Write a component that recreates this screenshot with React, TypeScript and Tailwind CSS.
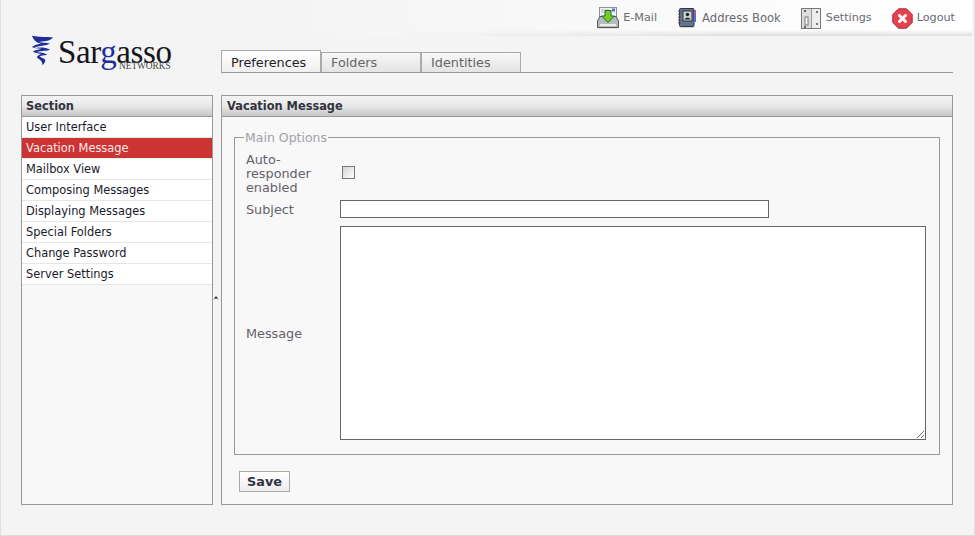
import React from "react";

const font = { fontFamily: '"DejaVu Sans", Verdana, sans-serif' };

function MailIcon() {
  return (
    <svg width="22" height="22" viewBox="0 0 22 22">
      <rect x="2.5" y="0.5" width="17" height="12" fill="#eef1f5" stroke="#8a929a" />
      <rect x="15" y="1.5" width="3" height="3" fill="#3f7fe0" />
      <path d="M4 3 H12 M4 5 H10" stroke="#b8c0c8" />
      <path d="M0.5 14 L3 9.5 H19 L21.5 14 V20.5 H0.5 Z" fill="#b8bcc0" stroke="#55595c" />
      <path d="M3 17 H19 V19 H3 Z" fill="#ececec" />
      <path d="M8 3.5 H14 V9 H17.5 L11 15.5 L4.5 9 H8 Z" fill="#74c832" stroke="#2f6a12" />
      <rect x="1" y="21" width="20" height="1" fill="#dddddd" />
    </svg>
  );
}
function BookIcon() {
  return (
    <svg width="20" height="22" viewBox="0 0 20 22">
      <rect x="2.5" y="1.5" width="14.5" height="18" rx="1" fill="#64748a" stroke="#2e3844" />
      <rect x="17" y="3" width="2" height="4" fill="#c04fa0" />
      <rect x="17" y="7" width="2" height="4" fill="#7a5cc8" />
      <rect x="17" y="11" width="2" height="4" fill="#4a70d8" />
      <rect x="6" y="4" width="9" height="10" fill="#c8d0d8" stroke="#303a44" />
      <circle cx="10.5" cy="7.5" r="1.7" fill="#222" />
      <path d="M7.5 12.5 C8 10 13 10 13.5 12.5 Z" fill="#222" />
      <path d="M1 4 H4 M1 7 H4 M1 10 H4 M1 13 H4 M1 16 H4" stroke="#555" strokeWidth="1" />
      <rect x="3" y="20" width="14" height="1" fill="#d8d8d8" />
    </svg>
  );
}
function SettingsIcon() {
  return (
    <svg width="20" height="21" viewBox="0 0 20 21">
      <rect x="0.5" y="0.5" width="19" height="20" fill="#eceeee" stroke="#777" />
      <rect x="1" y="1" width="9" height="19" fill="#dcdede" />
      <path d="M10.5 1 V20" stroke="#999" />
      <rect x="4" y="9" width="3" height="8" fill="#fff" stroke="#777" />
      <rect x="3" y="2" width="2" height="2" fill="#666" />
      <rect x="3" y="18" width="2" height="2" fill="#666" />
      <rect x="15" y="3" width="2" height="2" fill="#777" />
      <rect x="15" y="15" width="2" height="2" fill="#777" />
    </svg>
  );
}
function LogoutIcon() {
  return (
    <svg width="21" height="21" viewBox="0 0 21 21">
      <path d="M6.5 0.8 H14.5 L20.2 6.5 V14.5 L14.5 20.2 H6.5 L0.8 14.5 V6.5 Z" fill="#e4424f" stroke="#b02a36" />
      <path d="M7.5 7.5 L13.5 13.5 M13.5 7.5 L7.5 13.5" stroke="#fff" strokeWidth="3" strokeLinecap="round" />
    </svg>
  );
}

function Logo() {
  return (
    <div className="relative -mt-[1px] h-[40px] w-[150px]">
      <svg className="absolute left-[1px] top-0" width="23" height="31" viewBox="0 0 24 36" preserveAspectRatio="none">
        <path d="M1 1 C8 3 16 2 23 3 C20 7 12 8 8 8 C12 9 18 9 20 10 C16 13 8 12 3 15 C8 14 16 14 20 17 C15 19 8 18 6 20 C10 20 15 21 17 23 C13 24 10 24 9 25 C11 27 15 27 15 30 C14 33 13 34 12 35 C12 31 10 29 7 27 C5 25 8 23 11 22 C7 22 2 20 2 19 C6 17 9 17 11 16 C7 16 3 15 1 14 C4 11 8 11 11 10 C7 10 3 7 1 1 Z" fill="#1c2f9c" />
      </svg>
      <span
        className="absolute left-[28px] top-[-3px] text-[33px] leading-[40px] tracking-[-0.4px] text-[#15151c]"
        style={{ fontFamily: '"Liberation Serif", serif' }}
      >
        Sar<span className="text-[#1c2f9c]">g</span>asso
      </span>
      <span
        className="absolute left-[89px] top-[26px] text-[9.3px] leading-[10px] text-[#444]"
        style={{ fontFamily: '"Liberation Serif", serif' }}
      >
        NETWORKS
      </span>
    </div>
  );
}

function TopLink({ icon, label, gap, size }: { icon: React.ReactNode; label: string; gap: string; size: string }) {
  return (
    <div className={`flex items-center ${gap}`}>
      {icon}
      <span className={`pt-[1px] ${size} text-[#6a6a72]`}>{label}</span>
    </div>
  );
}

const sections = [
  "User Interface",
  "Vacation Message",
  "Mailbox View",
  "Composing Messages",
  "Displaying Messages",
  "Special Folders",
  "Change Password",
  "Server Settings",
];

function PanelHeader({ title, pad }: { title: string; pad: string }) {
  return (
    <div className={`h-[21px] border-b border-[#999] bg-gradient-to-b from-[#f4f4f4] via-[#e8e8e8] to-[#c6c6c6] ${pad} text-[11.4px] font-bold leading-[21px] text-[#333340]`}>
      {title}
    </div>
  );
}

export default function App() {
  return (
    <div
      className="flex h-[536px] w-[975px] flex-col overflow-hidden border-x border-b border-x-[#e0e0e0] border-b-[#dddddd] bg-[#f4f4f4] pr-[2px]"
      style={font}
    >
      <div className="relative flex h-[36px] shrink-0 items-center justify-end bg-gradient-to-r from-[#f4f4f4] from-30% to-white pr-[17px]">
        <div className="absolute bottom-0 left-0 h-[6px] w-full bg-gradient-to-b from-transparent to-[#dedede] [mask-image:linear-gradient(to_right,transparent_40%,black_75%)]" />
        <div className="relative flex items-center">
          <TopLink icon={<MailIcon />} label="E-Mail" gap="gap-[4px]" size="text-[11.2px]" />
          <div className="w-[20px]" />
          <TopLink icon={<BookIcon />} label="Address Book" gap="gap-[5px]" size="text-[11.6px]" />
          <div className="w-[20px]" />
          <TopLink icon={<SettingsIcon />} label="Settings" gap="gap-[5px]" size="text-[11.2px]" />
          <div className="w-[20px]" />
          <TopLink icon={<LogoutIcon />} label="Logout" gap="gap-[4px]" size="text-[11.2px]" />
        </div>
      </div>

      <div className="flex h-[37px] shrink-0 pl-[29px]">
        <Logo />
        <div className="ml-[41px] flex w-[732px] items-end border-b border-[#999] text-[12.8px]">
          <div className="flex h-[22px] w-[100px] items-center border border-b-0 border-[#aaa] bg-gradient-to-b from-white to-[#f0f0f0] pl-[9px] pt-[3px] text-[#222]">
            Preferences
          </div>
          <div className="flex h-[20px] w-[100px] items-center border border-b-0 border-[#aaa] bg-gradient-to-b from-[#f8f8f8] to-[#e4e4e4] pl-[9px] pt-[1px] text-[#666]">
            Folders
          </div>
          <div className="flex h-[20px] w-[100px] items-center border border-b-0 border-[#aaa] bg-gradient-to-b from-[#f8f8f8] to-[#e4e4e4] pl-[9px] pt-[1px] text-[#666]">
            Identities
          </div>
        </div>
      </div>

      <div className="box-content flex h-[410px] shrink-0 pl-[20px] pt-[22px]">
        <div className="relative h-[410px] w-[192px] border border-[#999] bg-[#f8f8f8]">
          <PanelHeader title="Section" pad="pl-[4px]" />
          <div className="text-[11.4px]">
            {sections.map((s, i) => (
              <div
                key={s}
                className={
                  i === 1
                    ? "h-[21px] border-b border-[#eeeeee] bg-[#cc3333] pl-[4px] leading-[21px] text-[#fbeaea]"
                    : "h-[21px] border-b border-[#e6e6e6] bg-white pl-[4px] leading-[21px] text-[#1a1a2a]"
                }
              >
                {s}
              </div>
            ))}
          </div>
          <svg className="absolute left-[191px] top-[199px]" width="6" height="6" viewBox="0 0 6 6">
            <path d="M0.5 4.5 L3 1 L5.5 4.5 L3.5 3.5 L2.5 3.5 Z" fill="#222" />
          </svg>
        </div>

        <div className="ml-[8px] h-[410px] w-[732px] border border-[#999] bg-[#f8f8f8]">
          <PanelHeader title="Vacation Message" pad="pl-[5px]" />
          <div className="pl-[12px] pr-[12px] pt-[13px]">
            <fieldset className="h-[325px] border border-[#999] pl-[11px] pr-[13px]">
              <legend className="-ml-[2px] px-[1px] text-[12.5px] leading-[15px] text-[#a0a0a8]">Main Options</legend>
              <div className="grid grid-cols-[94px_1fr] pt-[6px] text-[12.8px] leading-[14px] text-[#66606a]">
                <div className="pt-[2px]">
                  Auto-
                  <br />
                  responder
                  <br />
                  enabled
                </div>
                <div className="flex items-center pb-[1px] pl-[2px]">
                  <div className="h-[13px] w-[13px] border border-[#777] bg-gradient-to-br from-[#d4d4d4] to-white" />
                </div>
                <div className="flex items-center pt-[6px]">Subject</div>
                <div className="pt-[5px]">
                  <input
                    type="text"
                    readOnly
                    className="block h-[18px] w-[429px] border border-[#666] bg-white"
                  />
                </div>
                <div className="flex items-center pt-[9px]">Message</div>
                <div className="pt-[8px]">
                  <textarea
                    readOnly
                    className="block h-[214px] w-[586px] border border-[#666] bg-white"
                  />
                </div>
              </div>
            </fieldset>
            <button className="ml-[5px] mt-[16px] block h-[21px] w-[51px] border border-[#aaa] bg-gradient-to-b from-white to-[#eeeeee] text-[12.8px] font-bold leading-[18px] text-[#333344]">
              Save
            </button>
          </div>
        </div>
      </div>
    </div>
  );
}
